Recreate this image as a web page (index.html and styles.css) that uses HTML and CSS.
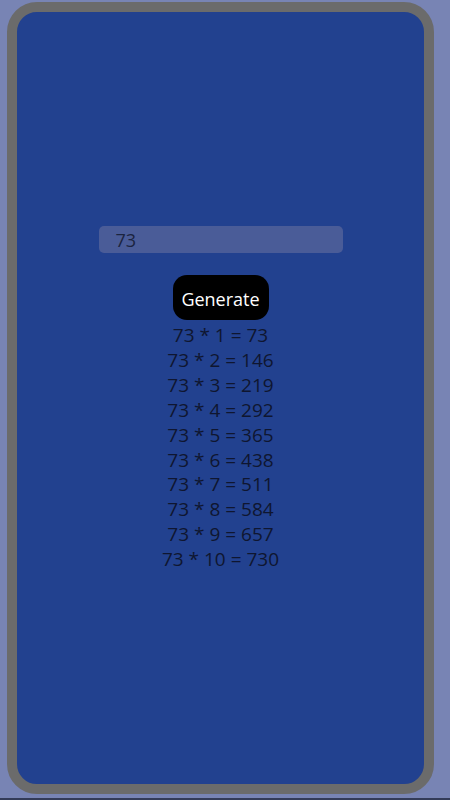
FILE: index.html
```html
<!DOCTYPE html>
<html>
<head>
<meta charset="utf-8">
<link rel="stylesheet" href="styles.css">
</head>
<body>
<div class="frame">
  <div class="content">
    <div class="input"><span>73</span></div>
    <button class="btn">Generate</button>
    <div class="table">
      <div>73 * 1 = 73</div>
      <div>73 * 2 = 146</div>
      <div>73 * 3 = 219</div>
      <div>73 * 4 = 292</div>
      <div>73 * 5 = 365</div>
      <div>73 * 6 = 438</div>
      <div>73 * 7 = 511</div>
      <div>73 * 8 = 584</div>
      <div>73 * 9 = 657</div>
      <div>73 * 10 = 730</div>
    </div>
  </div>
</div>
</body>
</html>
```
FILE: styles.css
```css
html {
  background: #333b58;
  margin: 0;
  padding: 0;
}
body {
  margin: 0;
  height: 798px;
  background: #7884b4;
  overflow: hidden;
  font-family: "Open Sans", "Noto Sans", sans-serif;
}
.frame {
  box-sizing: border-box;
  margin: 2px 0 0 7px;
  width: 427px;
  height: 792px;
  border: 10px solid #6b6b6b;
  border-radius: 30px;
  background: #22418f;
  display: flex;
}
.content {
  flex: 1;
  display: flex;
  flex-direction: column;
  align-items: center;
  padding-top: 214px;
}
.input {
  box-sizing: border-box;
  width: 244px;
  height: 27px;
  background: #4a5c98;
  border-radius: 5px;
  padding-left: 17px;
  display: flex;
  align-items: center;
  font-size: 18px;
  color: #1b2440;
}
.btn {
  margin-top: 22px;
  width: 96px;
  height: 45px;
  border: none;
  border-radius: 14px;
  background: #000;
  color: #fff;
  font-family: inherit;
  font-size: 18px;
  padding: 3px 0 0;
}
.table {
  margin-top: 3px;
  text-align: center;
  font-size: 19px;
  line-height: 24.9px;
  color: #0f1630;
}
```
